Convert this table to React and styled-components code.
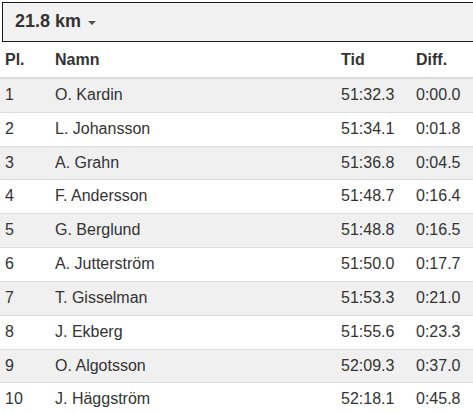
import React from "react";
import styled, { createGlobalStyle } from "styled-components";

const GlobalStyle = createGlobalStyle`
    html, body {
        margin: 0;
        padding: 0;
        background: #fff;
        overflow: hidden;
    }
    body {
        font-family: "Liberation Sans", Arial, sans-serif;
        font-size: 16px;
        line-height: 1.42857;
        color: #333;
    }
`;

const Page = styled.div`
    width: 473px;
`;

const DistanceBar = styled.div`
    box-sizing: border-box;
    display: flex;
    align-items: center;
    height: 40px;
    margin: 2px -4px 0 2px;
    padding: 0 12px;
    background: #f2f2f2;
    border: 1px solid #1a1a1a;
    font-size: 18px;
    font-weight: bold;
    color: #333;
`;

const Caret = styled.span`
    display: inline-block;
    width: 0;
    height: 0;
    margin-left: 7px;
    margin-top: 2px;
    border-top: 4px solid #555;
    border-left: 4px solid transparent;
    border-right: 4px solid transparent;
`;

const Table = styled.table`
    width: 473px;
    margin-top: 2px;
    border-collapse: collapse;
    border-spacing: 0;
    table-layout: fixed;
`;

const HeadCell = styled.th`
    text-align: left;
    font-weight: bold;
    padding: 5px;
    border-bottom: 2px solid #ddd;
    white-space: nowrap;
`;

const Row = styled.tr`
    background: ${(p) => (p.$striped ? "#f0f0f0" : "#fff")};
`;

const Cell = styled.td`
    padding: 5px;
    border-top: 1px solid #ddd;
    white-space: nowrap;
`;

const results = [
    ["1", "O. Kardin", "51:32.3", "0:00.0"],
    ["2", "L. Johansson", "51:34.1", "0:01.8"],
    ["3", "A. Grahn", "51:36.8", "0:04.5"],
    ["4", "F. Andersson", "51:48.7", "0:16.4"],
    ["5", "G. Berglund", "51:48.8", "0:16.5"],
    ["6", "A. Jutterström", "51:50.0", "0:17.7"],
    ["7", "T. Gisselman", "51:53.3", "0:21.0"],
    ["8", "J. Ekberg", "51:55.6", "0:23.3"],
    ["9", "O. Algotsson", "52:09.3", "0:37.0"],
    ["10", "J. Häggström", "52:18.1", "0:45.8"],
];

export default function App() {
    return (
        <Page>
            <GlobalStyle />
            <DistanceBar>
                21.8 km<Caret />
            </DistanceBar>
            <Table>
                <colgroup>
                    <col style={{ width: 50 }} />
                    <col style={{ width: 286 }} />
                    <col style={{ width: 75 }} />
                    <col style={{ width: 62 }} />
                </colgroup>
                <thead>
                    <tr>
                        <HeadCell>Pl.</HeadCell>
                        <HeadCell>Namn</HeadCell>
                        <HeadCell>Tid</HeadCell>
                        <HeadCell>Diff.</HeadCell>
                    </tr>
                </thead>
                <tbody>
                    {results.map((r, i) => (
                        <Row key={r[0]} $striped={i % 2 === 0}>
                            {r.map((v, j) => (
                                <Cell key={j}>{v}</Cell>
                            ))}
                        </Row>
                    ))}
                </tbody>
            </Table>
        </Page>
    );
}
